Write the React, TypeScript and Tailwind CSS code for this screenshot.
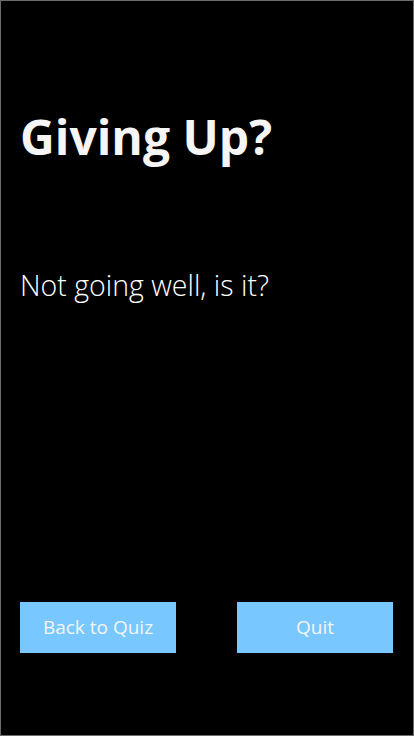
export default function App() {
  return (
    <div
      className="h-[736px] w-[414px] bg-black border border-[#6b6b6b] flex flex-col text-white"
      style={{ fontFamily: '"Open Sans", "Noto Sans", sans-serif' }}
    >
      <div className="pl-[19px] pt-[103px]">
        <h1 className="text-[48px] font-bold leading-[66px] text-[#f5f5f5]">Giving Up?</h1>
      </div>
      <div className="pl-[19px] pt-[96px]">
        <p className="text-[28.5px] font-light leading-[38px]">Not going well, is it?</p>
      </div>
      <div className="flex-1" />
      <div className="flex justify-between pl-[19px] pr-[20px] pb-[82px]">
        <button className="w-[156px] h-[51px] bg-[#78c7ff] text-[19px] text-[#f5f5f5]">Back to Quiz</button>
        <button className="w-[156px] h-[51px] bg-[#78c7ff] text-[19px] text-[#f5f5f5]">Quit</button>
      </div>
    </div>
  );
}
